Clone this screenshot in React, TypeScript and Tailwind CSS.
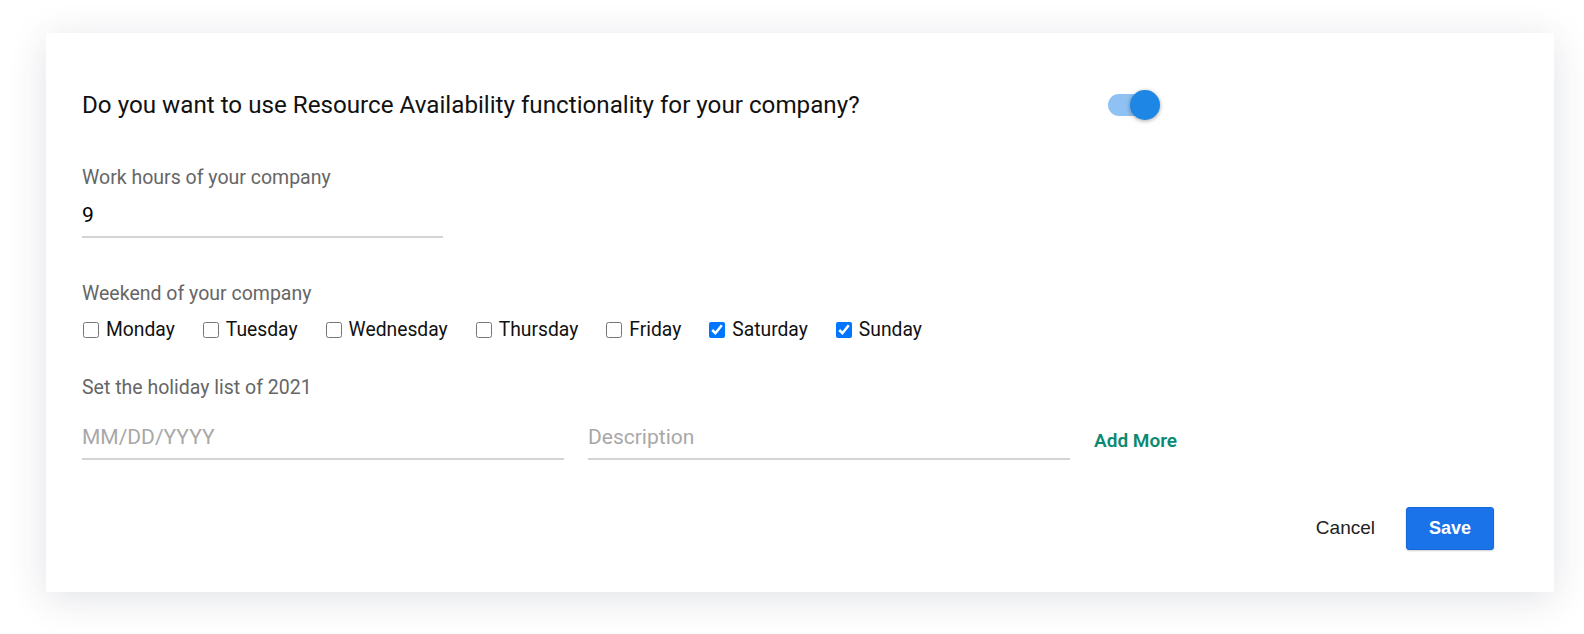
import React, { useState } from "react";

const days = [
  { name: "Monday", checked: false },
  { name: "Tuesday", checked: false },
  { name: "Wednesday", checked: false },
  { name: "Thursday", checked: false },
  { name: "Friday", checked: false },
  { name: "Saturday", checked: true },
  { name: "Sunday", checked: true },
];

function Toggle({ on, onChange }: { on: boolean; onChange: () => void }) {
  return (
    <button
      onClick={onChange}
      className="relative w-[52px] h-[30px] flex items-center shrink-0"
    >
      <span
        className={`block w-[44px] h-[22px] rounded-full ${
          on ? "bg-[#8fc1f2]" : "bg-[#c4c4c4]"
        }`}
      />
      <span
        className={`absolute top-0 w-[30px] h-[30px] rounded-full shadow-[0_1px_4px_rgba(0,0,0,0.35)] ${
          on ? "left-[22px] bg-[#1e86e4]" : "left-0 bg-[#fafafa]"
        }`}
      />
    </button>
  );
}

function FieldLabel({ children }: { children: React.ReactNode }) {
  return (
    <div className="text-[19.5px] leading-[24px] text-[#666666]">
      {children}
    </div>
  );
}

export default function App() {
  const [enabled, setEnabled] = useState(true);
  const [hours, setHours] = useState("9");
  const [weekend, setWeekend] = useState(days);

  const toggleDay = (name: string) => {
    setWeekend((w) =>
      w.map((d) => (d.name === name ? { ...d, checked: !d.checked } : d))
    );
  };

  return (
    <div className="min-h-[634px] bg-white pt-[33px] pl-[46px] font-['Roboto',sans-serif]">
      <div className="w-[1508px] h-[559px] bg-white shadow-[0_6px_36px_rgba(40,52,80,0.14)] pl-[36px] pr-[60px] pt-[57px] flex flex-col">
        <div className="flex items-center h-[30px]">
          <div className="w-[1026px] text-[24.2px] leading-[30px] text-[#111111]">
            Do you want to use Resource Availability functionality for your
            company?
          </div>
          <Toggle on={enabled} onChange={() => setEnabled((e) => !e)} />
        </div>

        <div className="mt-[46px]">
          <FieldLabel>Work hours of your company</FieldLabel>
          <div className="mt-[11px] w-[361px] pb-[7px] border-b-2 border-[#d4d4d4]">
            <input
              value={hours}
              onChange={(e) => setHours(e.target.value)}
              className="block w-full h-[28px] text-[21px] leading-[28px] text-black outline-none bg-transparent"
            />
          </div>
        </div>

        <div className="mt-[44px]">
          <FieldLabel>Weekend of your company</FieldLabel>
          <div className="mt-[10px] flex items-center gap-[27px] h-[28px]">
            {weekend.map((d) => (
              <label
                key={d.name}
                className="flex items-center gap-[7px] text-[19.3px] leading-[28px] text-[#111111] cursor-pointer"
              >
                <input
                  type="checkbox"
                  checked={d.checked}
                  onChange={() => toggleDay(d.name)}
                  className="m-0 ml-[1px] w-4 h-4"
                />
                {d.name}
              </label>
            ))}
          </div>
        </div>

        <div className="mt-[32px]">
          <FieldLabel>Set the holiday list of 2021</FieldLabel>
          <div className="mt-[23px] flex items-center gap-[24px]">
            <div className="w-[482px] pb-[7px] border-b-2 border-[#d4d4d4]">
              <input
                placeholder="MM/DD/YYYY"
                className="block w-full h-[28px] text-[21px] leading-[28px] outline-none bg-transparent placeholder:text-[#a8a8a8]"
              />
            </div>
            <div className="w-[482px] pb-[7px] border-b-2 border-[#d4d4d4]">
              <input
                placeholder="Description"
                className="block w-full h-[28px] text-[21px] leading-[28px] outline-none bg-transparent placeholder:text-[#a8a8a8]"
              />
            </div>
            <button className="text-[19px] font-semibold text-[#0b8a72]">
              Add More
            </button>
          </div>
        </div>

        <div className="mt-[47px] flex justify-end items-center gap-[31px]">
          <button className="font-['Liberation_Sans',sans-serif] text-[19px] text-[#222222]">
            Cancel
          </button>
          <button className="w-[88px] h-[43px] rounded-[3px] bg-[#1a73e8] border border-[#1669d8] shadow-[0_1px_2px_rgba(0,0,0,0.2)] text-white font-['Liberation_Sans',sans-serif] font-bold text-[18px]">
            Save
          </button>
        </div>
      </div>
    </div>
  );
}
